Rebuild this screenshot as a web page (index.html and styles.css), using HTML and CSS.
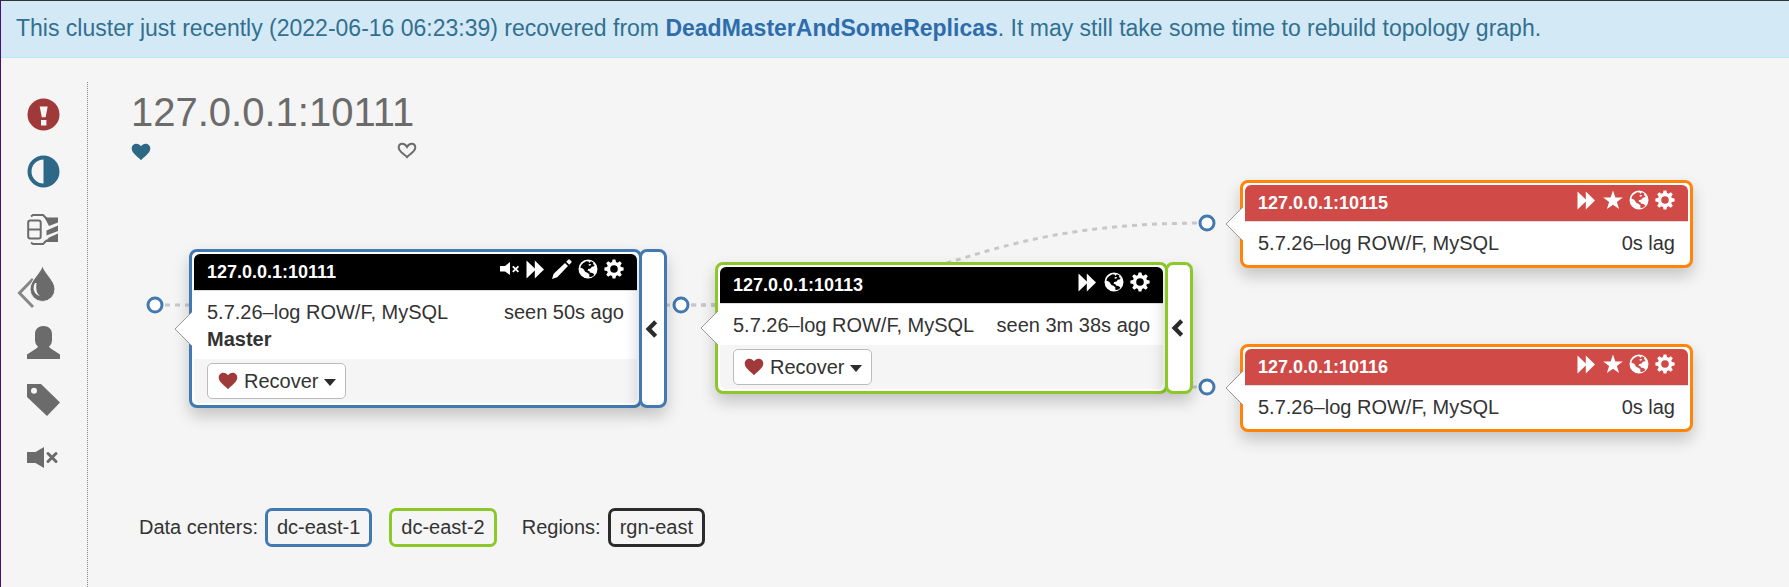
FILE: index.html
```html
<!DOCTYPE html>
<html lang="en">
<head>
<meta charset="utf-8">
<title>127.0.0.1:10111</title>
<link rel="stylesheet" href="styles.css">
</head>
<body>
<svg class="sprite" aria-hidden="true">
  <symbol id="i-mute" viewBox="0 0 20 20"><path d="M0 7h5l5-4v13l-5-3.500H0z"/><path d="M12.800 7.300l5.600 5.600M18.400 7.300l-5.600 5.600" fill="none" stroke="currentColor" stroke-width="1.800"/></symbol>
  <symbol id="i-forward" viewBox="0 0 20 20"><path d="M.5 1.500l8.300 8V1.500l9.200 9-9.200 9v-8l-8.300 8z"/></symbol>
  <symbol id="i-pencil" viewBox="0 0 20 20"><path d="M0 20l1.700-5.200L13 4l3 3L5.200 18.300zM14.200 2.800l2-2a1.200 1.200 0 0 1 1.700 0l1.300 1.300a1.200 1.200 0 0 1 0 1.700l-2 2z"/></symbol>
  <symbol id="i-globe" viewBox="0 0 20 20"><path fill-rule="evenodd" d="M10 .5a9.500 9.500 0 1 0 0 19 9.500 9.500 0 0 0 0-19zM8.300 2.200l2.200.3.900 1.600 1.500-1.800 2.500 1.100-.5 1.900 1.500.4-.2 1.500-2.400.6-1.200 1.700-2.400.5-.7 1.600 2 .7.300 1.200 2.500.5 1.900 1.300-.8 1.600-2.600 1-1.700-.3.400-2.200-2-1.700-2.100-.7-2.200-3.200L2.300 8.400l1-2.300 2-2.200z"/><path d="M10.500 5.300l2.700-.4-.8 1.700-1.500.2z"/></symbol>
  <symbol id="i-cog" viewBox="0 0 20 20"><path fill-rule="evenodd" d="M8.600.4h2.800l.6 2.700 1.500.6 2.300-1.500 2 2-1.500 2.300.6 1.500 2.700.6v2.800l-2.700.6-.6 1.500 1.500 2.300-2 2-2.300-1.500-1.500.6-.6 2.700H8.600L8 16.900l-1.500-.6-2.300 1.500-2-2 1.500-2.300-.6-1.500-2.700-.6V8.600L3.100 8l.6-1.500-1.500-2.300 2-2 2.300 1.500L8 3.100zM10 6.200a3.800 3.800 0 1 0 0 7.600 3.800 3.800 0 0 0 0-7.600z"/></symbol>
  <symbol id="i-star" viewBox="0 0 20 20"><path d="M10 .5l2.400 6.900 7.400.1-5.900 4.400 2.200 7-6.100-4.200-6.100 4.200 2.200-7L.2 7.500l7.400-.1z"/></symbol>
  <symbol id="i-heart" viewBox="0 0 20 20"><path d="M10 18.300C7.500 15.300.7 11.600.7 6.600.7 3.600 3 1.800 5.400 1.800c2 0 3.500 1 4.600 2.500 1.100-1.500 2.600-2.500 4.600-2.500 2.400 0 4.700 1.800 4.700 4.800 0 5-6.800 8.700-9.300 11.700z"/></symbol>
  <symbol id="i-heart-empty" viewBox="0 0 20 20"><path fill="none" stroke="currentColor" stroke-width="2" d="M10 15.200C7.500 12.200 1.700 9.800 1.700 5.500c0-2.300 1.700-3.700 3.700-3.700s3.500 1.300 4.600 3.200c1.100-1.900 2.600-3.200 4.600-3.200s3.700 1.400 3.700 3.700c0 4.300-5.800 6.700-8.300 9.700z"/></symbol>
  <symbol id="i-chevron" viewBox="0 0 14 18"><path d="M9.200.3L.6 9l8.600 8.700 3-3L6.600 9l5.600-5.700z"/></symbol>
  <symbol id="i-arrow" viewBox="0 0 18 36"><path d="M18 1L1 18l17 17z" fill="#fff"/><path d="M18 1L1 18l17 17" fill="none" stroke="#999"/></symbol>
</svg>

<div class="banner" role="status">This cluster just recently (2022-06-16 06:23:39) recovered from <a href="#">DeadMasterAndSomeReplicas</a>. It may still take some time to rebuild topology graph.</div>

<div class="layout">
  <nav class="sidebar">
    <button class="side-btn danger" aria-label="Problems"><svg viewBox="0 0 33 33"><circle cx="16.500" cy="16.500" r="16"/><path fill="#f5f5f5" d="M12.700 8.500h8l-2.100 10.800h-3.800zM14 22h5.400v5.400H14z"/></svg></button>
    <button class="side-btn info" aria-label="Compact display"><svg viewBox="0 0 33 33"><path fill-rule="evenodd" d="M16.500.5a16 16 0 1 0 0 32 16 16 0 0 0 0-32zm0 4v24a12 12 0 0 1 0-24z"/></svg></button>
    <button class="side-btn" aria-label="Pool indicator"><svg viewBox="0 0 33 33"><rect x="1.200" y="8.500" width="12.500" height="18" rx="2" fill="none" stroke="currentColor" stroke-width="2"/><path d="M1 17.500h13" stroke="currentColor" stroke-width="2"/><path d="M4 4.500l2-1.500h10l4 4M4 30.500l2 1.500h10l4-4" fill="none" stroke="currentColor" stroke-width="2"/><path d="M17.500 5.500h13.500v5l-9 3.500zM19.500 18.500l11.500-5v5.500l-11.500 4.500zM22 25.500l9-4v8.500H18z"/></svg></button>
    <button class="side-btn" aria-label="Colorize by data center"><svg viewBox="0 0 33 33"><path d="M6 10L-7.500 24 6 38" fill="none" stroke="currentColor" stroke-width="3" opacity=".8"/><path stroke="#f5f5f5" d="M15.500-3.500c2 8 12.500 15 12.500 23.500a12.500 12.500 0 0 1-25 0c0-8.500 10.500-15.500 12.500-23.500z"/><path fill="#f5f5f5" d="M8 14c-3 5-1 12 5 13-4-3-4-8-3.500-13z"/></svg></button>
    <button class="side-btn" aria-label="Anonymize"><svg viewBox="0 0 33 33"><path d="M16.500 0c5 0 8.500 3 8.500 8v6c0 2.500-1 5-3 6.500l1 1.500 10 6.500V33H0v-4.500L10 22l1-1.500C9 19 8 16.500 8 14V8c0-5 3.500-8 8.500-8z"/></svg></button>
    <button class="side-btn" aria-label="Tags"><svg viewBox="0 0 33 33"><path fill-rule="evenodd" d="M0 1h14l19 18.500L20 33 0 14zM7 4.800a3 3 0 1 0 0 6 3 3 0 0 0 0-6z"/></svg></button>
    <button class="side-btn" aria-label="Silent UI"><svg viewBox="0 0 33 33"><path d="M0 12h8.500L17 7v21l-8.500-5H0z"/><path d="M21 13.500l8 8M29 13.500l-8 8" stroke="currentColor" stroke-width="3" stroke-linecap="round"/></svg></button>
  </nav>

  <main class="content">
    <header class="heading">
      <h1>127.0.0.1:10111</h1>
      <div class="hearts"><svg class="icon info"><use href="#i-heart"/></svg><svg class="icon"><use href="#i-heart-empty"/></svg></div>
    </header>

    <section class="topology">
      <svg class="links" aria-hidden="true">
        <g class="paths">
          <path d="M67 136H593"/>
          <path d="M593 136C856 136 856 54 1119 54"/>
          <path d="M593 136C856 136 856 218 1119 218"/>
        </g>
        <g class="dots">
          <circle cx="67" cy="136" r="7"/><circle cx="593" cy="136" r="7"/>
          <circle cx="1119" cy="54" r="7"/><circle cx="1119" cy="218" r="7"/>
        </g>
      </svg>

      <article class="node east1 n10111">
        <div class="card">
          <div class="card-head black"><h2>127.0.0.1:10111</h2>
            <div class="tools">
              <button aria-label="Downtimed"><svg class="icon"><use href="#i-mute"/></svg></button>
              <button aria-label="Log replica updates"><svg class="icon"><use href="#i-forward"/></svg></button>
              <button aria-label="Writeable"><svg class="icon"><use href="#i-pencil"/></svg></button>
              <button aria-label="GTID"><svg class="icon"><use href="#i-globe"/></svg></button>
              <button aria-label="Settings"><svg class="icon"><use href="#i-cog"/></svg></button>
            </div></div>
          <div class="card-body"><div class="row"><span>5.7.26–log ROW/F, MySQL</span><span>seen 50s ago</span></div><strong>Master</strong></div>
          <div class="card-foot"><button class="recover"><svg class="icon"><use href="#i-heart"/></svg>Recover<i class="caret"></i></button></div>
        </div>
        <button class="toggle" aria-label="Collapse"><svg><use href="#i-chevron"/></svg></button>
        <svg class="arrow"><use href="#i-arrow"/></svg>
      </article>

      <article class="node east2 n10113">
        <div class="card">
          <div class="card-head black"><h2>127.0.0.1:10113</h2>
            <div class="tools">
              <button aria-label="Log replica updates"><svg class="icon"><use href="#i-forward"/></svg></button>
              <button aria-label="GTID"><svg class="icon"><use href="#i-globe"/></svg></button>
              <button aria-label="Settings"><svg class="icon"><use href="#i-cog"/></svg></button>
            </div></div>
          <div class="card-body"><div class="row"><span>5.7.26–log ROW/F, MySQL</span><span>seen 3m 38s ago</span></div></div>
          <div class="card-foot"><button class="recover"><svg class="icon"><use href="#i-heart"/></svg>Recover<i class="caret"></i></button></div>
        </div>
        <button class="toggle" aria-label="Collapse"><svg><use href="#i-chevron"/></svg></button>
        <svg class="arrow"><use href="#i-arrow"/></svg>
      </article>

      <article class="node east3 n10115">
        <div class="card">
          <div class="card-head red"><h2>127.0.0.1:10115</h2>
            <div class="tools">
              <button aria-label="Log replica updates"><svg class="icon"><use href="#i-forward"/></svg></button>
              <button aria-label="Candidate"><svg class="icon"><use href="#i-star"/></svg></button>
              <button aria-label="GTID"><svg class="icon"><use href="#i-globe"/></svg></button>
              <button aria-label="Settings"><svg class="icon"><use href="#i-cog"/></svg></button>
            </div></div>
          <div class="card-body"><div class="row"><span>5.7.26–log ROW/F, MySQL</span><span>0s lag</span></div></div>
        </div>
        <svg class="arrow"><use href="#i-arrow"/></svg>
      </article>

      <article class="node east3 n10116">
        <div class="card">
          <div class="card-head red"><h2>127.0.0.1:10116</h2>
            <div class="tools">
              <button aria-label="Log replica updates"><svg class="icon"><use href="#i-forward"/></svg></button>
              <button aria-label="Candidate"><svg class="icon"><use href="#i-star"/></svg></button>
              <button aria-label="GTID"><svg class="icon"><use href="#i-globe"/></svg></button>
              <button aria-label="Settings"><svg class="icon"><use href="#i-cog"/></svg></button>
            </div></div>
          <div class="card-body"><div class="row"><span>5.7.26–log ROW/F, MySQL</span><span>0s lag</span></div></div>
        </div>
        <svg class="arrow"><use href="#i-arrow"/></svg>
      </article>
    </section>

    <footer class="legend">
      <div class="group"><span>Data centers:</span><span class="tag east1">dc-east-1</span></div>
      <span class="tag east2">dc-east-2</span>
      <div class="group regions"><span>Regions:</span><span class="tag region">rgn-east</span></div>
    </footer>
  </main>
</div>
</body>
</html>
```
FILE: styles.css
```css
* { box-sizing: border-box; }

body {
  margin: 0;
  min-height: 100vh;
  display: flex;
  flex-direction: column;
  background: #f5f5f5;
  border-top: 1px solid #333;
  border-left: 1px solid #4b0c7c;
  color: #333;
  font: 20px/27px "Liberation Sans", Arial, sans-serif;
}

button {
  font: inherit;
  color: inherit;
  background: none;
  border: 0;
  padding: 0;
  cursor: pointer;
}

.sprite { display: none; }
.icon { display: block; width: 20px; height: 20px; fill: currentColor; }

.banner {
  padding: 14px 15px 15px;
  background: #d4e9f6;
  border-bottom: 1px solid #bce8f1;
  color: #31708f;
  font-size: 23px;
}
.banner a { color: #2e6cab; font-weight: bold; text-decoration: none; }

.layout { flex: 1; display: flex; padding-top: 24px; }

.sidebar {
  flex: none;
  display: flex;
  flex-direction: column;
  align-items: center;
  gap: 24px;
  width: 87px;
  padding: 16px 2px 0 0;
  border-right: 1px dotted #888;
}
.side-btn { width: 33px; height: 33px; color: #6b6b6b; }
.side-btn svg { display: block; width: 33px; height: 33px; fill: currentColor; overflow: visible; }
.side-btn.danger { color: #a03a3a; }
.info, .side-btn.info { color: #2d6887; }

.content { flex: 1; }

.heading { padding: 9px 0 0 43px; color: #6b6b6b; }
.heading h1 { margin: 0; font-size: 40px; line-height: 42px; font-weight: normal; }
.hearts { display: flex; justify-content: space-between; width: 286px; padding-top: 9px; }

.topology { position: relative; height: 331px; margin-top: 7px; }
.links { position: absolute; inset: 0; width: 100%; height: 100%; }
.paths { fill: none; stroke: #c8c8c8; stroke-width: 3; stroke-dasharray: 5 5; }
.dots { fill: #fff; stroke: #4279b0; stroke-width: 3; }

.node { position: absolute; display: flex; }
.n10111 { left: 101px; top: 80px; }
.n10113 { left: 627px; top: 93px; }
.n10115 { left: 1152px; top: 11px; }
.n10116 { left: 1152px; top: 175px; }

.east1 { border-color: #4279b0; }
.east2 { border-color: #8cc82a; }
.east3 { border-color: #ff8408; }
.region { border-color: #2b2b2b; }

.card,
.toggle {
  border: 3px solid;
  border-color: inherit;
  border-radius: 8px;
  background: #fff;
  box-shadow: 0 8px 16px rgba(0, 0, 0, 0.2);
}
.card { width: 453px; padding: 2px; }
.toggle { width: 28px; margin-left: -3px; padding-right: 3px; display: flex; align-items: center; justify-content: center; }
.toggle svg { width: 14px; height: 18px; fill: #2b2b2b; }
.arrow { position: absolute; left: -15px; top: calc(50% - 18px); width: 18px; height: 36px; }

.card-head {
  display: flex;
  justify-content: space-between;
  height: 37px;
  padding: 5px 13px 0;
  border-bottom: 1px solid #ddd;
  border-radius: 6px 6px 0 0;
  color: #fff;
}
.card-head h2 { margin: 0; font-size: 18px; line-height: 27px; }
.black { background: #000; }
.red { background: #d04b48; }
.tools { display: flex; gap: 6px; }
.tools button { height: 20px; }

.card-body { padding: 8px 13px 6px; }
.card-body strong { display: block; }
.row { display: flex; justify-content: space-between; white-space: nowrap; }

.card-foot { padding: 4px 13px; background: #f5f5f5; border-radius: 0 0 6px 6px; }
.recover {
  display: flex;
  align-items: center;
  gap: 6px;
  height: 36px;
  padding: 0 9px 0 10px;
  background: #fff;
  border: 1px solid #bbb;
  border-radius: 5px;
}
.recover .icon { color: #a03a3a; }
.caret { border: 6px solid transparent; border-top: 7px solid #2b2b2b; border-bottom: 0; margin-top: 2px; }

.legend { display: flex; align-items: center; gap: 17px; padding: 8px 0 0 51px; }
.group { display: flex; align-items: center; gap: 7px; }
.regions { padding-left: 8px; }
.tag { padding: 3px 9px; border-width: 3px; border-style: solid; border-radius: 7px; }
```
